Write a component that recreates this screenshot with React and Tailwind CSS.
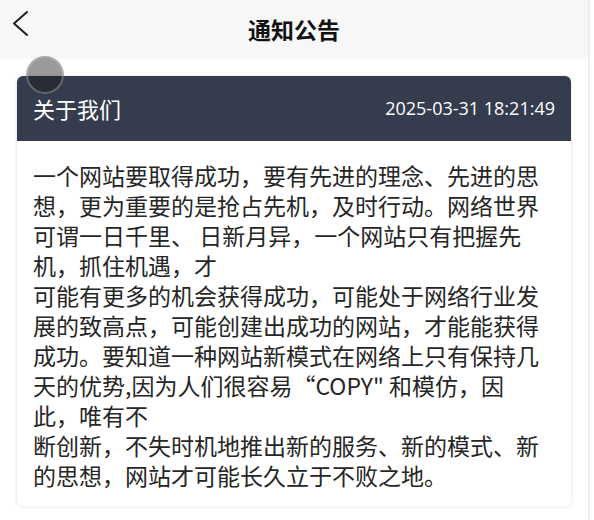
const notice = {
  title: '关于我们',
  time: '2025-03-31 18:21:49',
  paragraphs: [
    '一个网站要取得成功，要有先进的理念、先进的思想，更为重要的是抢占先机，及时行动。网络世界可谓一日千里、 日新月异，一个网站只有把握先机，抓住机遇，才',
    '可能有更多的机会获得成功，可能处于网络行业发展的致高点，可能创建出成功的网站，才能能获得成功。要知道一种网站新模式在网络上只有保持几天的优势,因为人们很容易“COPY" 和模仿，因',
    '此，唯有不',
    '断创新，不失时机地推出新的服务、新的模式、新的思想，网站才可能长久立于不败之地。',
  ],
};

const BackIcon = () => (
  <svg width="18" height="27" viewBox="0 0 18 27" fill="none" stroke="#1f1f1f" strokeWidth="2" strokeLinecap="round" strokeLinejoin="round">
    <polyline points="15,2 2,13.5 15,25" />
  </svg>
);

const NoticeCard = ({ item }) => (
  <div className="relative mx-4 rounded-lg bg-white shadow-[0_1px_4px_rgba(0,0,0,0.06)] border border-[#f1f2f4]">
    <div className="flex h-[65px] items-center justify-between rounded-t-md bg-[#353c4e] px-4 text-white">
      <span className="text-[22px]">{item.title}</span>
      <span className="text-[18px] font-medium font-['Open_Sans',sans-serif] text-white">{item.time}</span>
    </div>
    <div className="px-4 pt-[19px] pb-4 text-[23px] leading-[30px] text-[#262626] break-all">
      {item.paragraphs.map((p, i) => (
        <p key={i}>{p}</p>
      ))}
    </div>
    <div className="absolute left-[9px] -top-[20px] h-[38px] w-[38px] rounded-full bg-[rgba(25,25,25,0.44)] border-2 border-[rgba(210,210,210,0.35)]" />
  </div>
);

export default function App() {
  return (
    <div className="h-[520px] w-[594px] overflow-hidden bg-white font-['Noto_Sans_CJK_SC',sans-serif]">
      <div className="h-full w-[590px] border-r-2 border-[#e8eef5]">
        <header className="relative flex h-[59px] items-center justify-center bg-[#f7f7f7]">
          <button className="absolute left-[12px] top-[10px]">
            <BackIcon />
          </button>
          <h1 className="text-[23px] font-bold text-[#111]">通知公告</h1>
        </header>
        <div className="pt-4">
          <NoticeCard item={notice} />
        </div>
      </div>
    </div>
  );
}
